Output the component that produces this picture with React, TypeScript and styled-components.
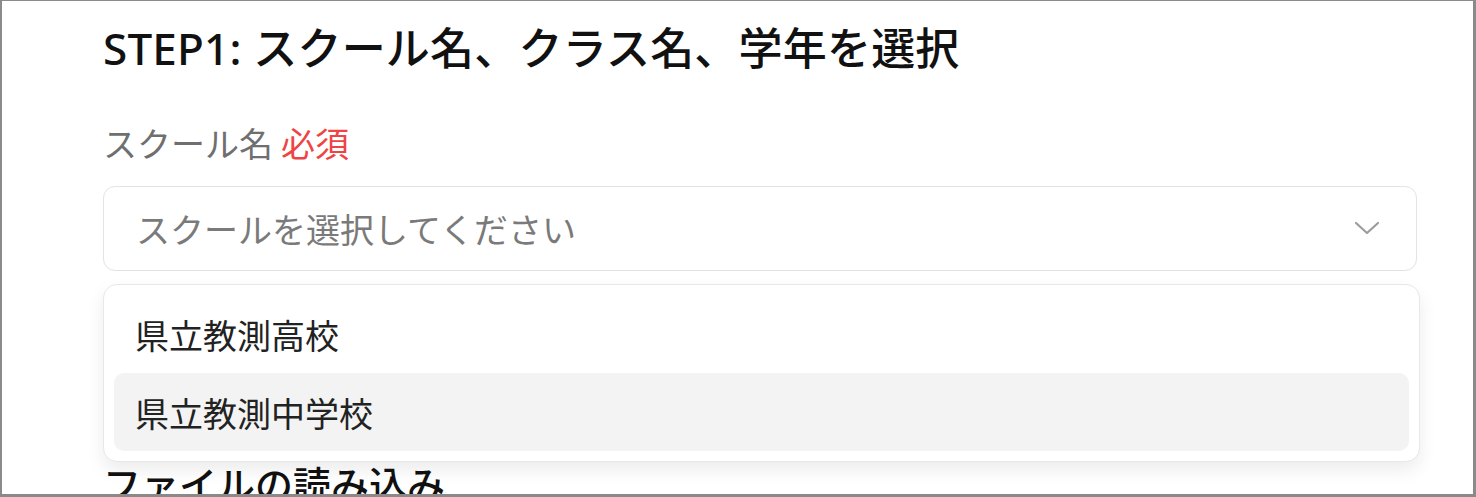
import React from 'react'
import styled, { createGlobalStyle } from 'styled-components'

const GlobalStyle = createGlobalStyle`
  html, body {
    margin: 0;
    padding: 0;
    background: #ffffff;
  }
  body {
    font-family: 'Noto Sans', 'Noto Sans CJK JP', sans-serif;
  }
`

const Frame = styled.div`
  box-sizing: border-box;
  width: 1476px;
  height: 497px;
  overflow: hidden;
  border-style: solid;
  border-color: #8a8a8a;
  border-width: 1px 3px 3px 2px;
  background: #fff;
`

const Content = styled.div`
  position: relative;
  box-sizing: border-box;
  padding: 21px 0 0 101px;
  width: 1415px;
`

const Title = styled.h1`
  margin: 0 0 46px;
  font-size: 44px;
  line-height: 52px;
  font-weight: 500;
  color: #111;
  letter-spacing: 0.2px;
`

const Label = styled.div`
  font-size: 34px;
  line-height: 48px;
  color: #6f6f6f;
  margin-bottom: 18px;
`

const Required = styled.span`
  color: #ef4444;
  margin-left: 8px;
`

const Field = styled.div`
  position: relative;
`

const Trigger = styled.div`
  box-sizing: border-box;
  height: 85px;
  display: flex;
  align-items: center;
  justify-content: space-between;
  padding: 0 36px 0 32px;
  border: 1.5px solid #e3e3e3;
  border-radius: 12px;
  font-size: 34px;
  color: #7a7a7a;
`

const Menu = styled.div`
  position: absolute;
  top: 98px;
  left: 0;
  right: -3px;
  z-index: 2;
  box-sizing: border-box;
  padding: 10px;
  background: #fff;
  border: 1.5px solid #e8e8e8;
  border-radius: 14px;
  box-shadow: 0 8px 18px rgba(0, 0, 0, 0.08);
`

const Option = styled.div<{ $active?: boolean }>`
  height: 78px;
  display: flex;
  align-items: center;
  padding-left: 21px;
  border-radius: 10px;
  font-size: 34px;
  color: #222;
  background: ${p => (p.$active ? '#f3f3f3' : 'transparent')};
`

const NextSection = styled.h2`
  margin: 188px 0 0;
  font-size: 38px;
  line-height: 50px;
  font-weight: 500;
  color: #111;
`

const Chevron = () => (
  <svg width="26" height="15" viewBox="0 0 26 15" fill="none">
    <polyline
      points="2,2 13,12 24,2"
      stroke="#9c9c9c"
      strokeWidth="2.2"
      strokeLinecap="round"
      strokeLinejoin="round"
    />
  </svg>
)

const schools = ['県立教測高校', '県立教測中学校']

const App = (): JSX.Element => (
  <Frame>
    <GlobalStyle />
    <Content>
      <Title>STEP1: スクール名、クラス名、学年を選択</Title>
      <Label>
        スクール名<Required>必須</Required>
      </Label>
      <Field>
        <Trigger>
          <span>スクールを選択してください</span>
          <Chevron />
        </Trigger>
        <Menu>
          {schools.map((s, i) => (
            <Option key={s} $active={i === 1}>
              {s}
            </Option>
          ))}
        </Menu>
      </Field>
      <NextSection>ファイルの読み込み</NextSection>
    </Content>
  </Frame>
)

export default App
